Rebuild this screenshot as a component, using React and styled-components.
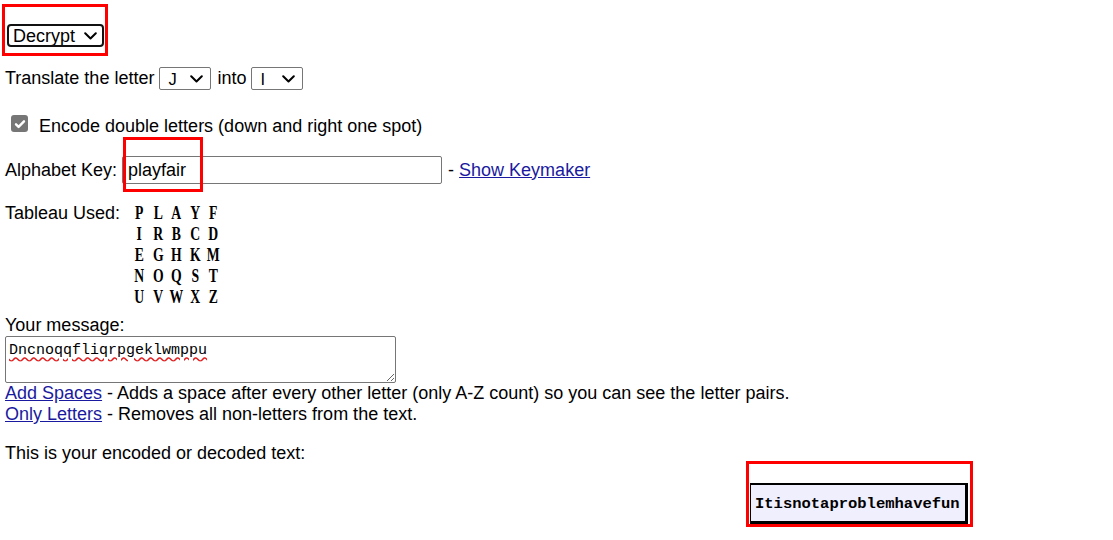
import { useState } from "react";
import styled, { createGlobalStyle } from "styled-components";

const Global = createGlobalStyle`
    body {
        margin: 0;
        padding: 0 0 0 5px;
        background: #fff;
        color: #000;
        font-family: "Liberation Sans", Arial, sans-serif;
        font-size: 18px;
        overflow: hidden;
    }
`

const Page = styled.div`
    display: flex;
    flex-direction: column;
    width: 1108px;
    height: 540px;
`

const TopLine = styled.div`
    margin-top: -19px;
    height: 18px;
    line-height: 18px;
    white-space: nowrap;
`

const Link = styled.a`
    color: #1a1aa0;
    text-decoration: underline;
    cursor: pointer;
`

const Row = styled.div`
    display: flex;
    align-items: center;
    margin-top: ${(p) => p.$mt || 0}px;
    height: ${(p) => (p.$h ? `${p.$h}px` : "auto")};
    line-height: 21px;
`

const Marked = styled.span`
    position: relative;
    display: inline-flex;
    margin-left: ${(p) => p.$ml || 0}px;
`

const RedBox = styled.span`
    position: absolute;
    top: ${(p) => p.$t}px;
    left: ${(p) => p.$l}px;
    width: ${(p) => p.$w}px;
    height: ${(p) => p.$hh}px;
    border: 3px solid #f00;
    box-sizing: border-box;
    pointer-events: none;
`

const SelectWrap = styled.span`
    position: relative;
    display: inline-flex;
    margin: 0 ${(p) => p.$mr || 0}px 0 ${(p) => p.$ml || 0}px;
`

const Select = styled.select`
    appearance: none;
    -webkit-appearance: none;
    font-family: "Liberation Sans", Arial, sans-serif;
    font-size: ${(p) => (p.$big ? "18px" : "16.5px")};
    height: 23px;
    width: ${(p) => p.$w}px;
    padding: 0 0 0 ${(p) => (p.$big ? 4 : 8)}px;
    margin: 0;
    border: ${(p) => (p.$big ? "2px solid #111" : "1px solid #767676")};
    border-radius: ${(p) => (p.$big ? 4 : 2)}px;
    background: #fff;
    color: #000;
    box-sizing: border-box;
    outline: none;
`

const Chevron = styled.svg`
    position: absolute;
    right: ${(p) => (p.$big ? 7 : 8)}px;
    top: 50%;
    margin-top: -4px;
    pointer-events: none;
`

const Check = styled.span`
    display: inline-flex;
    align-items: center;
    justify-content: center;
    width: 17px;
    height: 17px;
    margin: 0 11px 0 6px;
    border-radius: 3px;
    background: #767676;
`

const CheckLabel = styled.span`
    padding-top: 5px;
`

const KeyInput = styled.input`
    width: 320px;
    height: 28px;
    box-sizing: border-box;
    margin: 0;
    padding: 0 5px;
    border: 1px solid #767676;
    border-radius: 2px;
    font-family: "Liberation Sans", Arial, sans-serif;
    font-size: 18px;
    color: #000;
    outline: none;
`

const Dash = styled.span`
    margin: 0 5px 0 6px;
`

const Tableau = styled.div`
    display: flex;
    margin-top: 19px;
`

const TableauLabel = styled.div`
    width: 125px;
    line-height: 21px;
`

const Grid = styled.div`
    display: grid;
    grid-template-columns: repeat(5, 18.5px);
    grid-auto-rows: 21px;
`

const Cell = styled.span`
    display: flex;
    align-items: center;
    justify-content: center;
    font-family: "Liberation Serif", "Times New Roman", serif;
    font-weight: bold;
    font-size: 18.5px;
    transform: scaleX(0.74);
`

const Line = styled.div`
    line-height: 21px;
    margin-top: ${(p) => p.$mt || 0}px;
    white-space: nowrap;
`

const Message = styled.textarea`
    display: block;
    width: 391px;
    height: 47px;
    box-sizing: border-box;
    padding: 5px 3px 3px;
    border: 1px solid #767676;
    border-radius: 2px;
    font-family: "Liberation Mono", "Courier New", monospace;
    font-size: 15px;
    line-height: 17px;
    color: #000;
    text-decoration: underline wavy #e02020;
    text-underline-offset: 2px;
    outline: none;
`

const OutputRow = styled.div`
    display: flex;
    padding-left: 745px;
    margin-top: 19px;
`

const Output = styled.div`
    display: flex;
    align-items: center;
    width: 218px;
    height: 41px;
    box-sizing: border-box;
    padding: 1px 0 0 4px;
    background: #efeffd;
    border-style: solid;
    border-color: #000;
    border-width: 2px 3px 3px 1px;
    font-family: "Liberation Mono", "Courier New", monospace;
    font-weight: bold;
    font-size: 15.5px;
`

const tableau = ["PLAYF", "IRBCD", "EGHKM", "NOQST", "UVWXZ"];
const letters = "ABCDEFGHIJKLMNOPQRSTUVWXYZ".split("");

function Dropdown({ big, w, ml, mr, value, onChange, children }) {
    return (
        <SelectWrap $ml={ml} $mr={mr}>
            <Select $big={big} $w={w} value={value} onChange={onChange}>
                {children}
            </Select>
            <Chevron $big={big} width="13" height="8" viewBox="0 0 13 8">
                <path d="M1.2 1.2l5.3 5.3 5.3-5.3" stroke="#000" strokeWidth="2" fill="none" strokeLinecap="round" strokeLinejoin="round" />
            </Chevron>
        </SelectWrap>
    );
}

export default function App() {
    const [mode, setMode] = useState("decrypt");
    const [from, setFrom] = useState("J");
    const [to, setTo] = useState("I");
    const [key, setKey] = useState("playfair");
    const [msg, setMsg] = useState("Dncnoqqfliqrpgeklwmppu");

    return (
        <Page>
            <Global />
            <TopLine>
                To decrypt, simply paste the message in, choose the same key, and switch the mode; see the <Link>Settings page</Link> for changing languages.
            </TopLine>

            <Row $mt={25}>
                <Marked $ml={2}>
                    <Dropdown big w={97} value={mode} onChange={(e) => setMode(e.target.value)}>
                        <option value="encrypt">Encrypt</option>
                        <option value="decrypt">Decrypt</option>
                    </Dropdown>
                    <RedBox $t={-20} $l={-5} $w={106} $hh={52} />
                </Marked>
            </Row>

            <Row $mt={20} $h={23}>
                Translate the letter
                <Dropdown w={52} ml={5} mr={6} value={from} onChange={(e) => setFrom(e.target.value)}>
                    {letters.map((l) => <option key={l}>{l}</option>)}
                </Dropdown>
                into
                <Dropdown w={52} ml={5} value={to} onChange={(e) => setTo(e.target.value)}>
                    {letters.map((l) => <option key={l}>{l}</option>)}
                </Dropdown>
            </Row>

            <Row $mt={25} $h={17}>
                <Check>
                    <svg width="12" height="12" viewBox="0 0 12 12">
                        <path d="M2 6.3l2.6 2.6L10 3.3" stroke="#fff" strokeWidth="2.4" fill="none" strokeLinecap="round" strokeLinejoin="round" />
                    </svg>
                </Check>
                <CheckLabel>Encode double letters (down and right one spot)</CheckLabel>
            </Row>

            <Row $mt={24} $h={28}>
                Alphabet Key:
                <Marked $ml={5}>
                    <KeyInput value={key} onChange={(e) => setKey(e.target.value)} spellCheck={false} />
                    <RedBox $t={-19} $l={1} $w={80} $hh={55} />
                </Marked>
                <Dash>-</Dash>
                <Link>Show Keymaker</Link>
            </Row>

            <Tableau>
                <TableauLabel>Tableau Used:</TableauLabel>
                <Grid>
                    {tableau.map((row) =>
                        row.split("").map((c) => <Cell key={c}>{c}</Cell>)
                    )}
                </Grid>
            </Tableau>

            <Line $mt={7}>Your message:</Line>
            <Message value={msg} onChange={(e) => setMsg(e.target.value)} spellCheck={false} />

            <Line>
                <Link>Add Spaces</Link> - Adds a space after every other letter (only A-Z count) so you can see the letter pairs.
            </Line>
            <Line>
                <Link>Only Letters</Link> - Removes all non-letters from the text.
            </Line>

            <Line $mt={18}>This is your encoded or decoded text:</Line>

            <OutputRow>
                <Marked>
                    <Output>Itisnotaproblemhavefun</Output>
                    <RedBox $t={-22} $l={-4} $w={227} $hh={66} />
                </Marked>
            </OutputRow>
        </Page>
    );
}
